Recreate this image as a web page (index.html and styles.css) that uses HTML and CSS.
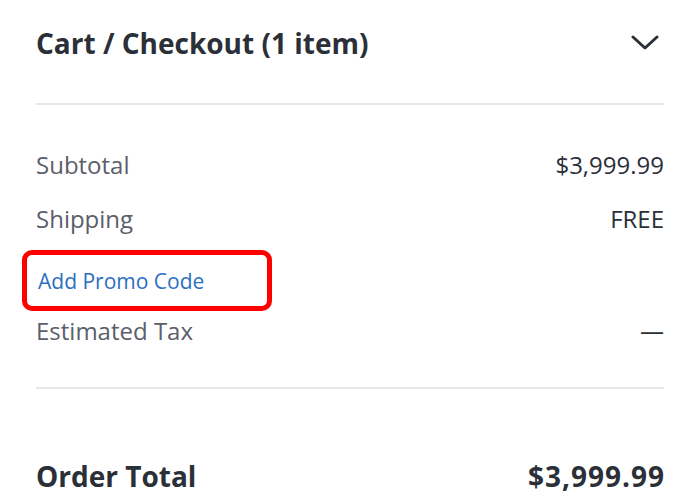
FILE: index.html
```html
<!DOCTYPE html>
<html>
<head>
<meta charset="utf-8">
<link rel="stylesheet" href="styles.css">
</head>
<body>
<div class="summary">
  <div class="header">
    <h1 class="title">Cart / Checkout (1 item)</h1>
    <svg class="chevron" width="28" height="16" viewBox="0 0 28 16"><path d="M2 2 L14 13 L26 2" fill="none" stroke="#2b2f38" stroke-width="3" stroke-linecap="round" stroke-linejoin="round"/></svg>
  </div>
  <div class="divider"></div>
  <div class="lines">
    <div class="row"><span class="label">Subtotal</span><span class="value">$3,999.99</span></div>
    <div class="row"><span class="label">Shipping</span><span class="value">FREE</span></div>
    <div class="promo"><a class="promo-link">Add Promo Code</a></div>
    <div class="row tax"><span class="label">Estimated Tax</span><span class="value">—</span></div>
  </div>
  <div class="divider"></div>
  <div class="total"><span>Order Total</span><span class="total-value">$3,999.99</span></div>
</div>
</body>
</html>
```
FILE: styles.css
```css
html, body {
  margin: 0;
  padding: 0;
  background: #ffffff;
}
body {
  font-family: "Open Sans", "Noto Sans", sans-serif;
  color: #2b2f38;
  overflow: hidden;
}
.summary {
  padding: 0 36px;
}
.header {
  height: 86px;
  display: flex;
  align-items: center;
  justify-content: space-between;
}
.title {
  margin: 0;
  font-size: 28px;
  font-weight: 700;
  color: #2b2f38;
}
.chevron {
  margin-right: 5px;
}
.divider {
  height: 2px;
  background: #e8e8e8;
  margin-top: 17px;
}
.lines {
  padding-top: 32px;
  display: flex;
  flex-direction: column;
}
.row {
  height: 54px;
  display: flex;
  align-items: center;
  justify-content: space-between;
  font-size: 24px;
}
.label {
  color: #5c5e6b;
}
.value {
  color: #2b2f38;
}
.promo {
  margin-top: 5px;
  margin-left: -14px;
  width: 250px;
  height: 61px;
  box-sizing: border-box;
  border: 5px solid #ff0000;
  border-radius: 10px;
  display: flex;
  align-items: center;
  padding-left: 11px;
}
.promo-link {
  color: #2c6fc2;
  font-size: 21px;
}
.row.tax {
  height: 38px;
}
.lines + .divider {
  margin-top: 38px;
}
.total {
  margin-top: 67px;
  height: 40px;
  display: flex;
  align-items: center;
  justify-content: space-between;
  font-size: 28px;
  font-weight: 700;
}
.total-value {
  letter-spacing: 1px;
  margin-right: -1px;
}
```
